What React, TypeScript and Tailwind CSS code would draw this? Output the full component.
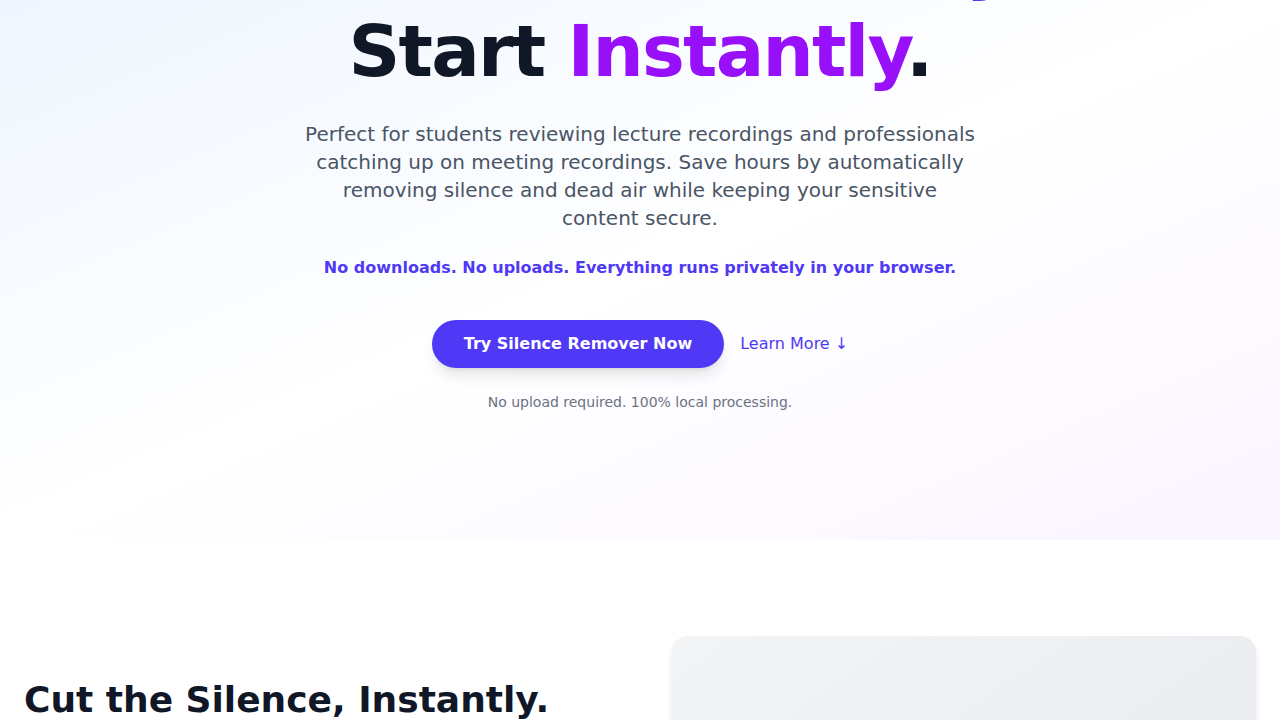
import React from "react";

export default function App() {
  return (
    <div className="h-[720px] overflow-hidden bg-white font-['DejaVu_Sans',sans-serif]">
      <section className="bg-gradient-to-br from-blue-50 via-white to-purple-50 px-6 pb-32">
        <div className="mx-auto flex max-w-5xl flex-col items-center text-center">
          <h1 className="-mt-[84px] text-7xl font-bold leading-tight tracking-tight text-gray-900">
            Cut Pause <span className="text-indigo-600">Privately</span>.
            <br />
            Start <span className="text-purple-600">Instantly</span>.
          </h1>
          <p className="mt-6 max-w-2xl text-xl leading-7 text-gray-600">
            Perfect for students reviewing lecture recordings and professionals catching up on meeting recordings. Save hours by automatically removing silence and dead air while keeping your sensitive content secure.
          </p>
          <p className="mt-6 text-base font-semibold text-indigo-600">
            No downloads. No uploads. Everything runs privately in your browser.
          </p>
          <div className="mt-10 flex items-center gap-4">
            <button className="h-12 rounded-full bg-indigo-600 px-8 text-base font-semibold text-white shadow-lg">
              Try Silence Remover Now
            </button>
            <a className="text-base text-indigo-600">Learn More ↓</a>
          </div>
          <p className="mt-6 text-sm text-gray-500">No upload required. 100% local processing.</p>
        </div>
      </section>
      <section className="bg-white px-6 py-24">
        <div className="grid grid-cols-2 gap-16">
          <div className="pt-[44px]">
            <h2 className="text-4xl font-bold text-gray-900">Cut the Silence, Instantly.</h2>
          </div>
          <div className="h-[400px] rounded-2xl bg-gradient-to-br from-gray-100 to-gray-200 shadow-md"></div>
        </div>
      </section>
    </div>
  );
}
